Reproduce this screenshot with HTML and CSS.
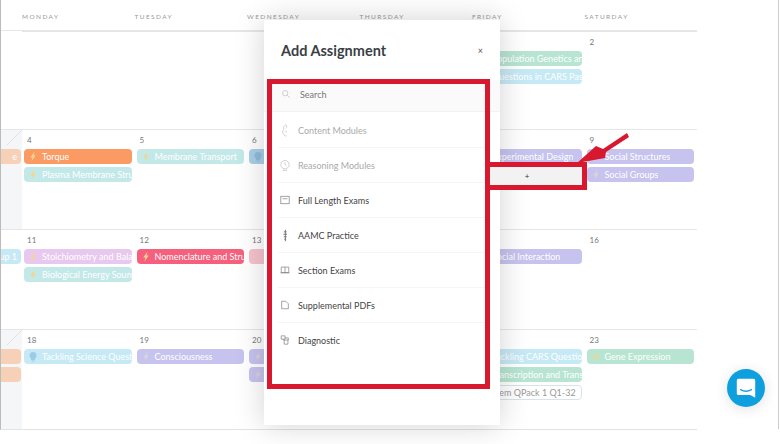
FILE: index.html
```html
<!DOCTYPE html>
<html lang="en">
<head>
  <meta charset="UTF-8">
  <title>Study Calendar</title>
  <link rel="stylesheet" href="styles.css">
</head>
<body>
  <svg class="defs" width="0" height="0">
    <symbol id="bolt" viewBox="2 0 6 10"><path d="M6.500.500 2.500 5.800h2L3.500 9.500 7.500 4.200h-2z"/></symbol>
    <symbol id="bulb" viewBox="0 0 10 10"><path d="M5 .500a3.500 3.500 0 0 1 2 6.400V8.500H3V6.900A3.500 3.500 0 0 1 5 .500zM3.500 9h3v1h-3z"/></symbol>
  </svg>

  <main class="calendar">
    <div class="head"></div>
    <div class="head">Monday</div>
    <div class="head">Tuesday</div>
    <div class="head">Wednesday</div>
    <div class="head">Thursday</div>
    <div class="head">Friday</div>
    <div class="head">Saturday</div>

    <!-- week 1 -->
    <div class="day"></div>
    <div class="day"></div>
    <div class="day"></div>
    <div class="day"></div>
    <div class="day"></div>
    <div class="day"><span class="num">1</span>
      <div class="ev green"><svg class="ev-icon"><use href="#bolt"/></svg><span class="ev-text">Population Genetics and Evolution</span></div>
      <div class="ev blue"><svg class="ev-icon"><use href="#bulb"/></svg><span class="ev-text">Questions in CARS Passages</span></div>
    </div>
    <div class="day"><span class="num">2</span></div>

    <!-- week 2 -->
    <div class="day past">
      <span class="num"></span>
      <div class="ev peach end"><span class="ev-text">e</span></div>
    </div>
    <div class="day"><span class="num">4</span>
      <div class="ev orange"><svg class="ev-icon"><use href="#bolt"/></svg><span class="ev-text">Torque</span></div>
      <div class="ev teal"><svg class="ev-icon"><use href="#bolt"/></svg><span class="ev-text">Plasma Membrane Structure</span></div>
    </div>
    <div class="day"><span class="num">5</span>
      <div class="ev teal"><svg class="ev-icon"><use href="#bolt"/></svg><span class="ev-text">Membrane Transport</span></div>
    </div>
    <div class="day"><span class="num">6</span>
      <div class="ev sky"><svg class="ev-icon"><use href="#bulb"/></svg></div>
    </div>
    <div class="day"></div>
    <div class="day"><span class="num">8</span>
      <div class="ev purple"><svg class="ev-icon"><use href="#bolt"/></svg><span class="ev-text">Experimental Design</span></div>
    </div>
    <div class="day"><span class="num">9</span>
      <div class="ev purple"><svg class="ev-icon"><use href="#bolt"/></svg><span class="ev-text">Social Structures</span></div>
      <div class="ev purple"><svg class="ev-icon"><use href="#bolt"/></svg><span class="ev-text">Social Groups</span></div>
    </div>

    <!-- week 3 -->
    <div class="day">
      <span class="num"></span>
      <div class="ev blue end"><span class="ev-text">up 1</span></div>
    </div>
    <div class="day"><span class="num">11</span>
      <div class="ev lilac"><svg class="ev-icon"><use href="#bolt"/></svg><span class="ev-text">Stoichiometry and Balancing</span></div>
      <div class="ev teal"><svg class="ev-icon"><use href="#bolt"/></svg><span class="ev-text">Biological Energy Sources</span></div>
    </div>
    <div class="day"><span class="num">12</span>
      <div class="ev red"><svg class="ev-icon"><use href="#bolt"/></svg><span class="ev-text">Nomenclature and Structure</span></div>
    </div>
    <div class="day"><span class="num">13</span>
      <div class="ev rose"></div>
    </div>
    <div class="day"></div>
    <div class="day"><span class="num">15</span>
      <div class="ev purple"><svg class="ev-icon"><use href="#bolt"/></svg><span class="ev-text">Social Interaction</span></div>
    </div>
    <div class="day"><span class="num">16</span></div>

    <!-- week 4 -->
    <div class="day past">
      <span class="num"></span>
      <div class="ev peach end"></div>
      <div class="ev peach end"></div>
    </div>
    <div class="day"><span class="num">18</span>
      <div class="ev blue"><svg class="ev-icon"><use href="#bulb"/></svg><span class="ev-text">Tackling Science Questions</span></div>
    </div>
    <div class="day"><span class="num">19</span>
      <div class="ev purple"><svg class="ev-icon"><use href="#bolt"/></svg><span class="ev-text">Consciousness</span></div>
    </div>
    <div class="day"><span class="num">20</span>
      <div class="ev purple"><svg class="ev-icon"><use href="#bolt"/></svg></div>
      <div class="ev purple"><svg class="ev-icon"><use href="#bolt"/></svg></div>
    </div>
    <div class="day"></div>
    <div class="day"><span class="num">22</span>
      <div class="ev blue"><svg class="ev-icon"><use href="#bulb"/></svg><span class="ev-text">Tackling CARS Questions</span></div>
      <div class="ev green"><svg class="ev-icon"><use href="#bolt"/></svg><span class="ev-text">Transcription and Translation</span></div>
      <div class="ev outline"><span class="ev-text">Biochem QPack 1 Q1-32</span></div>
    </div>
    <div class="day"><span class="num">23</span>
      <div class="ev green"><svg class="ev-icon"><use href="#bolt"/></svg><span class="ev-text">Gene Expression</span></div>
    </div>
  </main>

  <div class="scroll-line"></div>

  <!-- Add Assignment modal -->
  <section class="modal">
    <header class="modal-head">
      <h2>Add Assignment</h2>
      <span class="close">&times;</span>
    </header>
    <div class="search">
      <svg class="item-icon" viewBox="0 0 12 12"><circle cx="5" cy="5" r="3.200"/><path d="m7.500 7.500 2.800 2.800"/></svg>
      <span>Search</span>
    </div>
    <ul class="items">
      <li class="off"><svg class="item-icon tall" viewBox="0 0 12 16"><path d="M7 1C4.500 2 3.500 4 4.500 6.500L3 9c0 3 2 5.500 5 6M7 1c1.500 1 1.500 3 0 4.500M5.500 9.500c1-.5 2-.5 3 .5"/></svg>Content Modules</li>
      <li class="off"><svg class="item-icon tall" viewBox="0 0 12 14"><circle cx="6" cy="6" r="5"/><path d="M4 11.500V13h4v-1.500M6 3v3l1.500 1.200"/></svg>Reasoning Modules</li>
      <li><svg class="item-icon" viewBox="0 0 12 12"><rect x="1" y="1.500" width="10" height="9"/><path d="M3 4.500h6"/></svg>Full Length Exams</li>
      <li><svg class="item-icon tall" viewBox="0 0 12 16"><path d="M6.500 1v14M4.500 3.500h3.500M4 6.500h4.500M4.500 9.500h3.500M5 12.500h2.500" stroke-width="1.200"/></svg>AAMC Practice</li>
      <li><svg class="item-icon" viewBox="0 0 12 12"><path d="M1.500 2.500h9v6.500h-9zM.5 9.500h11M6 2.500v6.500"/></svg>Section Exams</li>
      <li><svg class="item-icon" viewBox="0 0 12 12"><path d="M2 1.500h5l3 3v6H2z"/></svg>Supplemental PDFs</li>
      <li><svg class="item-icon" viewBox="0 0 12 12"><path d="M1.500 1h4.500v4H1.500zM6 3.500h4v2.500H4v-1M5 6v5h4.500V6"/></svg>Diagnostic</li>
    </ul>
  </section>

  <!-- annotations drawn over the screenshot -->
  <div class="mark mark-list"></div>
  <div class="mark mark-slot">+</div>
  <svg class="arrow" viewBox="0 0 70 50"><path d="M57 3 59 7 36 22 35 28 7 33 26 16 33 19z"/></svg>

  <button class="chat">
    <svg viewBox="0 0 24 24"><path d="M5 3.500h14a1.500 1.500 0 0 1 1.500 1.500v16l-4.500-2.500H5A1.500 1.500 0 0 1 3.500 17V5A1.500 1.500 0 0 1 5 3.500z" fill="#fff"/><path d="M7 13.500c3 1.800 7 1.800 10 0" fill="none" stroke="#0ea0de" stroke-width="1.200" stroke-linecap="round"/></svg>
  </button>
</body>
</html>
```

FILE: styles.css
```css
html, body { margin: 0; height: 100%; }
body { width: 780px; height: 444px; overflow: hidden; position: relative; background: #fff; color: #444; font-family: Lato, Arial, sans-serif; }
.defs { position: absolute; }

.calendar { display: grid; grid-template-columns: 21px repeat(6, 112.5px); grid-template-rows: 31px 98px repeat(3, 100px); width: 696px; border-left: 1px solid #bbb; border-bottom: 1px solid #e3e3e3; }
.head { font-size: 6.500px; letter-spacing: 1.400px; text-transform: uppercase; color: #999; padding-top: 13px; border-bottom: 1px solid #e6e6e6; }
.day { padding: 2px 3px 0 2px; border-top: 1px solid #e6e6e6; overflow: hidden; min-width: 0; }
.head + .day { border-top: 0; }
.num { display: block; height: 17px; line-height: 16px; font-size: 8px; color: #777; padding-left: 3px; }
.past { background: #f5f6f7 linear-gradient(to bottom right, transparent 48%, #e2e2e2 48%, #e2e2e2 52%, transparent 52%) no-repeat right top / 15px 15px; }

.ev { display: flex; align-items: center; height: 15px; margin-bottom: 3px; border-radius: 4px; font-size: 9px; color: #fff; white-space: nowrap; overflow: hidden; }
.ev.end { width: 60px; margin-left: -42px; justify-content: flex-end; padding-right: 4px; box-sizing: border-box; }
.ev-icon { width: 10px; height: 11px; margin-left: 4px; flex: none; fill: #f3d58f; }
.ev-text { padding-left: 4px; overflow: hidden; }
.orange { background: #fb9a63; }
.teal { background: #c3e8e8; }
.green { background: #b7e5d2; }
.blue { background: #c6e9f6; }
.blue .ev-icon { fill: #9ccbe6; }
.sky { background: #a9cfe8; }
.sky .ev-icon { fill: #8fbbdc; }
.purple { background: #c6c4ef; }
.purple .ev-icon { fill: #dcd3d6; }
.lilac { background: #e8c8ef; }
.red { background: #f6607c; }
.rose { background: #f6c3cd; }
.peach { background: #f7d0b8; }
.outline { background: #fff; border: 1px solid #d6e3ea; color: #999; box-sizing: border-box; }
.outline .ev-text { padding-left: 2px; }

.scroll-line { position: absolute; left: 778px; top: 0; width: 1px; height: 429px; background: #ccc; }

.modal { position: absolute; left: 264px; top: 20px; width: 236px; height: 405px; background: #fff; box-shadow: 0 0 28px rgba(0,0,0,0.18); }
.modal-head { display: flex; align-items: center; justify-content: space-between; height: 60px; padding: 0 17px; }
.modal-head h2 { margin: 0; font-size: 14.500px; font-weight: 700; color: #3a3f45; }
.close { font-size: 9px; color: #555; }
.search { display: flex; align-items: center; height: 28px; padding: 0 0 3px 17px; background: #fafafa; border-bottom: 1px solid #f2f2f2; font-size: 9px; color: #777; gap: 9px; }
.items { list-style: none; margin: 0; padding: 1px 14px 0; }
.items li { display: flex; align-items: center; height: 34px; padding-left: 2px; border-bottom: 1px solid #f5f5f5; font-size: 9px; color: #444; gap: 8px; }
.items li:last-child { border-bottom: 0; }
.items .off { color: #aaa; }
.item-icon { width: 10px; height: 10px; flex: none; fill: none; stroke: #777; stroke-width: 0.800; }
.item-icon.tall { height: 13px; }
.off .item-icon, .search .item-icon { stroke: #bbb; }

.mark { position: absolute; border: 5px solid #d8182e; box-sizing: border-box; }
.mark-list { left: 267px; top: 79px; width: 223px; height: 310px; }
.mark-slot { left: 490px; top: 162px; width: 97px; height: 28px; padding-right: 18px; background: #f2f2f2; border-left: 0; display: flex; align-items: center; justify-content: center; font-size: 8px; color: #333; }
.arrow { position: absolute; left: 570px; top: 130px; width: 70px; height: 50px; fill: #d8182e; }

.chat { position: absolute; left: 727px; top: 369px; width: 38px; height: 38px; border: 0; padding: 6px; border-radius: 50%; background: #0ea0de; box-shadow: 0 2px 14px rgba(0,0,0,0.12); }
.chat svg { display: block; width: 26px; height: 26px; }
```
